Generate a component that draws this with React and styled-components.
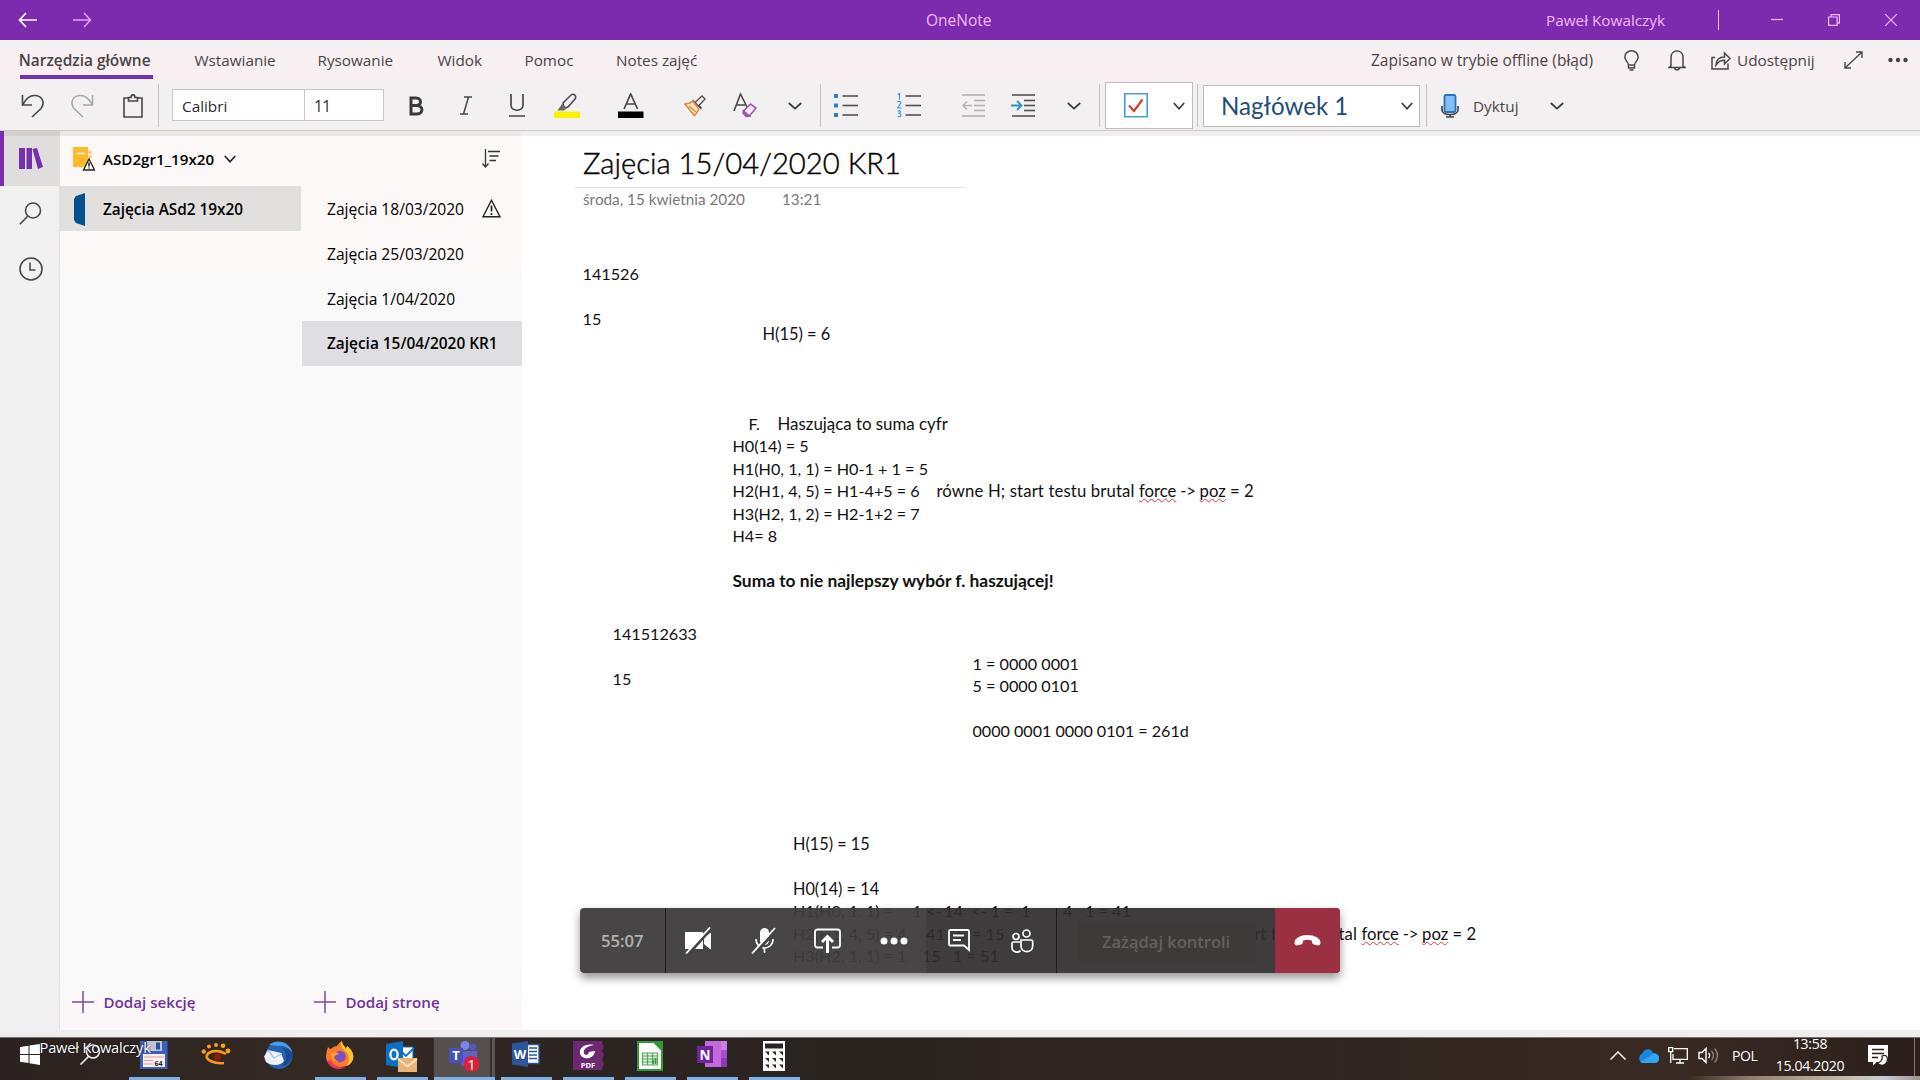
import React from 'react';
import styled, { createGlobalStyle, css } from 'styled-components';

const UI = '"Open Sans", "Noto Sans", sans-serif';
const NOTE = 'Lato, "Open Sans", sans-serif';

const Global = createGlobalStyle`
  * { box-sizing: border-box; }
  body { margin: 0; background: #fff; overflow: hidden; }
  svg { display: block; flex: none; }
`;

const Screen = styled.div`
  position: relative;
  width: 1920px;
  height: 1080px;
  overflow: hidden;
  display: flex;
  flex-direction: column;
  background: #fff;
  color: #000;
  font: 15.3px/20px ${UI};
  white-space: pre;
`;

/* ---------- Title bar ---------- */
const TitleBar = styled.header`
  height: 40px;
  flex: none;
  display: flex;
  align-items: center;
  background: #7c2bae;
  color: #f3b9f7;
  padding: 0 23px 0 18px;
`;
const NavArrows = styled.div`
  display: flex;
  gap: 36px;
  width: 908px;
`;
const AppName = styled.div`
  width: 620px;
  font-size: 15.5px;
  line-height: 42px;
`;
const Account = styled.div`
  width: 172px;
  line-height: 42px;
`;
const BarRule = styled.i`
  width: 1px;
  height: 20px;
  background: #f3b9f7;
`;
const WindowButtons = styled.div`
  display: flex;
  gap: 45px;
  margin-left: auto;
`;

/* ---------- Ribbon ---------- */
const Ribbon = styled.div`
  height: 91px;
  flex: none;
  background: linear-gradient(#f2f0f1 0, #f2f0f1 7px, #f8eff3 10px, #f8eff3 38px, #f3f0f1 44px);
  border-bottom: 1px solid #cfcacb;
  color: #4a4446;
`;
const TabRow = styled.nav`
  display: flex;
  align-items: flex-start;
  height: 40px;
  padding-left: 19.5px;
`;
const Tab = styled.div`
  height: 39px;
  line-height: 40px;
  font-size: ${p => (p.$active ? '15.45px' : '15.25px')};
  font-weight: ${p => (p.$active ? 600 : 400)};
  border-bottom: 4px solid ${p => (p.$active ? '#7530ad' : 'transparent')};
  width: ${p => p.$w}px;
  margin-right: ${p => p.$gap}px;
  text-indent: ${p => (p.$active ? -0.8 : 0)}px;
`;
const Status = styled.div`
  width: 253px;
  margin-left: 673px;
  font-size: 15.5px;
  line-height: 40px;
`;
const TabIcon = styled.div`
  width: ${p => p.$w}px;
  height: 40px;
  display: flex;
  align-items: center;
`;
const Share = styled.div`
  width: 107px;
  line-height: 40px;
  font-size: 15.35px;
`;
const Tools = styled.div`
  display: flex;
  align-items: center;
  height: 50px;
  padding: 1px 0 0 8px;
`;
const Tool = styled.div`
  width: ${p => p.$w}px;
  height: 40px;
  display: flex;
  align-items: center;
  justify-content: center;
`;
const Rule = styled.i`
  width: 1px;
  height: 43px;
  margin: 0 ${p => p.$r || 0}px 0 ${p => p.$l || 0}px;
  background: #c4bfc0;
`;
const FontBox = styled.div`
  display: flex;
  width: 212px;
  height: 32px;
  margin: 0 7px 1px 0;
  border: 1px solid #c9c4c6;
  background: #fff;
  color: #2c2a2b;
  line-height: 32px;
`;
const FontName = styled.div`
  width: 132px;
  padding-left: 9px;
  border-right: 1px solid #c9c4c6;
`;
const FontSize = styled.div`
  padding-left: 9px;
  letter-spacing: -0.6px;
  font-size: 15.5px;
`;
const CheckBox = styled.div`
  display: flex;
  align-items: center;
  gap: 25px;
  width: 88px;
  height: 47px;
  padding-left: 18px;
  border: 1px solid #c0bbbd;
  background: #fff;
`;
const StyleBox = styled.div`
  display: flex;
  align-items: center;
  justify-content: space-between;
  width: 217px;
  height: 42px;
  padding: 0 6px 0 17px;
  border: 1px solid #c0bbbd;
  background: #fff;
  color: #1f4e79;
  font: 24.1px/43px ${NOTE};
`;
const Dictate = styled.div`
  width: 50px;
  line-height: 40px;
`;

/* ---------- Body ---------- */
const Body = styled.div`
  height: 907px;
  display: flex;
  position: relative;
  flex: none;
`;
const TopShade = styled.div`
  position: absolute;
  left: 0;
  right: 0;
  top: 0;
  height: 5px;
  background: rgba(90, 70, 80, 0.09);
`;
const Rail = styled.aside`
  width: 60px;
  background: #f1f1f1;
  border-right: 1px solid #e3dfdf;
`;
const RailItem = styled.div`
  height: 55px;
  width: 60px;
  display: flex;
  align-items: center;
  padding: 0 0 0 ${p => (p.$active ? 15 : 19)}px;
  ${p => p.$active && css`
    border-left: 4px solid #7b2bb0;
    background: #e0dedd;
  `}
`;
const Panel = styled.section`
  width: 462px;
  display: flex;
  flex-direction: column;
  background: linear-gradient(#fcf8f8 0, #fcf8f8 130px, #f9f9f9 150px, #f9f9f9 840px, #fbf7f9 880px);
`;
const NotebookHead = styled.div`
  display: flex;
  align-items: center;
  height: 55px;
  padding: 0 22px 0 13px;
`;
const NotebookName = styled.div`
  width: 121px;
  margin-left: 8px;
  font-weight: 600;
  font-size: 15.15px;
`;
const SortSlot = styled.div`margin-left: auto;`;
const Lists = styled.div`
  display: flex;
  flex: 1;
`;
const SectionList = styled.div`width: 242px; display: flex; flex-direction: column;`;
const PageList = styled.div`width: 220px; display: flex; flex-direction: column;`;
const SectionRow = styled.div`
  display: flex;
  align-items: center;
  height: 45px;
  width: 241px;
  padding: 1px 0 0 14px;
  gap: 18px;
  background: #e2dfdf;
  font-weight: 600;
  font-size: 15.35px;
`;
const PageRow = styled.div`
  display: flex;
  align-items: center;
  height: 45px;
  padding: 0 21px 0 25px;
  justify-content: space-between;
  font-size: ${p => (p.$active ? 15.4 : 15.58)}px;
  ${p => p.$active && css`
    font-weight: 600;
    background: #dfdee0;
    padding-right: 0;
  `}
`;
const AddRow = styled.div`
  display: flex;
  align-items: center;
  gap: 9.5px;
  margin: auto 0 25px;
  height: 22px;
  padding: 0 0 0 12px;
  color: #71309f;
  font-weight: 600;
  font-size: 15.15px;
`;

/* ---------- Note canvas ---------- */
const Canvas = styled.main`
  flex: 1;
  position: relative;
  color: #111;
  font: 16.2px/22.5px ${NOTE};
`;
const NoteTitle = styled.div`
  margin: 6px 0 0 53px;
  padding-left: 8px;
  width: 390px;
  height: 51px;
  border-bottom: 1px solid #e6e3e5;
  font-size: 29.25px;
  font-weight: 300;
  line-height: 51px;
  color: #000;
  -webkit-text-stroke: 0.4px #000;
`;
const NoteDate = styled.div`
  display: flex;
  gap: 37px;
  margin-left: 61px;
  color: #7a7779;
  font-size: 15.3px;
  line-height: 22px;
`;
const Block = styled.div`
  position: absolute;
  left: ${p => p.$x - 522}px;
  top: ${p => p.$y - 131}px;
`;
const Line = styled.div`
  height: 22.5px;
  display: flex;
  padding-left: ${p => p.$indent || 0}px;
  font-weight: ${p => (p.$bold ? 700 : 400)};
  font-size: ${p => p.$size || 16.2}px;
`;
const Seg = styled.span`
  width: ${p => (p.$w ? `${p.$w}px` : 'auto')};
  font-size: ${p => p.$size || 16.2}px;
`;
const Lead = styled.span`letter-spacing: 0.14px;`;
const Arrow = styled.span`letter-spacing: -0.3px;`;
const Misspelt = styled.span`
  text-decoration: underline wavy #e0383e 1.2px;
  text-decoration-skip-ink: none;
  text-underline-offset: 1px;
`;

/* ---------- Call bar ---------- */
const CallBar = styled.div`
  position: absolute;
  left: 580px;
  top: 908px;
  width: 760px;
  height: 65px;
  display: flex;
  border-radius: 4px;
  overflow: hidden;
  color: #fff;
  background: linear-gradient(90deg, rgba(61, 59, 60, 0.95) 346px, rgba(46, 44, 45, 0.92) 346px);
`;
const CallShadow = styled.div`
  position: absolute;
  left: 580px;
  top: 908px;
  width: 760px;
  height: 65px;
  border-radius: 4px;
  box-shadow: 0 5px 10px rgba(0, 0, 0, 0.42);
  clip-path: polygon(-30px -30px, 790px -30px, 790px 95px, -30px 95px, -30px -30px, 0 0, 0 65px, 760px 65px, 760px 0, 0 0);
`;
const Timer = styled.div`
  width: 86px;
  padding-left: 21px;
  border-right: 1px solid #1f1e1e;
  color: #b4b1b0;
  font-weight: 600;
  font-size: 16.6px;
  line-height: 66px;
`;
const CallButton = styled.div`
  width: ${p => p.$w}px;
  display: flex;
  align-items: center;
  justify-content: center;
  padding-right: ${p => p.$nudge || 0}px;
`;
const ControlSlot = styled.div`
  flex: 1;
  display: flex;
  align-items: center;
  padding-left: 21px;
  border-left: 1px solid #1f1e1e;
`;
const ControlButton = styled.div`
  width: 178px;
  height: 40px;
  padding-left: 24px;
  background: #3c3b39;
  color: #626160;
  font-weight: 600;
  font-size: 16.5px;
  line-height: 41px;
`;
const HangUp = styled.div`
  width: 65px;
  display: flex;
  align-items: center;
  justify-content: center;
  background: #9c3043;
`;

/* ---------- Taskbar ---------- */
const Ledge = styled.div`
  height: 8px;
  margin-top: -8px;
  position: relative;
  background: #efedee;
  border-bottom: 1px solid #77706f;
  flex: none;
`;
const TaskbarFrame = styled.footer`
  height: 42px;
  flex: none;
  display: flex;
  position: relative;
  background: linear-gradient(90deg, #2b2321 0, #352923 340px, #2c2421 560px, #2a2421 900px, #33271f 1500px, #3a2a24 1650px, #2c1f1b 1920px);
`;
const Start = styled.div`
  width: 123.5px;
  display: flex;
  align-items: flex-start;
  padding: 6px 0 0 20px;
  gap: 40px;
`;
const TaskButton = styled.div`
  width: 62px;
  height: 42px;
  padding: 0 5.5px;
  display: flex;
  flex-direction: column;
  align-items: center;
  ${p => p.$focused && css`
    width: 61px;
    margin: 0 0.5px 0 0.5px;
    padding: 0;
    background: linear-gradient(90deg, #55504e 0 56px, #37302d 56px 57.5px, #5a5552 57.5px);
  `}
`;
const IconSlot = styled.div`
  height: 39px;
  display: flex;
  align-items: flex-start;
  padding: 3px 1px 0 0;
`;
const Running = styled.i`
  align-self: stretch;
  height: 3px;
  background: #7cb2e6;
`;
const Tray = styled.div`
  display: flex;
  align-items: center;
  margin-left: auto;
  width: 311px;
  height: 35px;
  padding: 0 5px 0 1px;
  color: #fff;
`;
const TrayIcon = styled.div`
  flex: none;
  width: ${p => p.$w}px;
`;
const Lang = styled.div`
  width: 34px;
  margin-left: -1px;
  font-size: 14px;
  letter-spacing: -0.45px;
`;
const Clock = styled.div`
  align-self: flex-start;
  width: 86px;
  height: 38px;
  margin: 0 15px 0 1px;
  text-align: center;
  font-size: 14.1px;
  letter-spacing: -0.35px;
`;
const ClockLine = styled.div`
  height: 22.5px;
  line-height: 22.5px;
  margin-top: ${p => p.$up || 0}px;
`;
const ShowDesktop = styled.i`
  align-self: flex-start;
  flex: none;
  width: 1px;
  height: 38px;
  margin-left: auto;
  background: #81756f;
`;
const Sliver = styled.i`
  position: absolute;
  right: 0;
  bottom: 0;
  width: 230px;
  height: 4px;
  background: linear-gradient(90deg, #3a2c22, #8d7f68 60px, #b3a58e 120px, #c9c2b4 170px, #c2cbdc 195px, #9a938d 230px);
`;
const Presenter = styled.div`
  position: absolute;
  left: 39.5px;
  top: 1037px;
  color: #fff;
  font-size: 14.6px;
  letter-spacing: -0.15px;
  text-shadow: 0 0 2px #000;
`;

/* ---------- Icons ---------- */
const Svg = ({ w, h, s = '#4a4648', sw = 1.4, children, ...r }) => (
  <svg width={w} height={h} viewBox={`0 0 ${w} ${h}`} fill="none" stroke={s} strokeWidth={sw} {...r}>{children}</svg>
);
const Chevron = ({ s = '#3c383a', w = 13 }) => (
  <Svg w={w} h={8} s={s} sw={1.7}><path d={`M.8 1 ${w / 2} 6.7 ${w - 0.8} 1`} /></Svg>
);
const Warning = ({ size = 19, fill = 'none' }) => (
  <svg width={size} height={size} viewBox="0 0 19 19" fill={fill} stroke="#222" strokeWidth="1.4">
    <path d="M9.5 1.2 18 17.8H1z" /><path d="M9.5 6.5v6M9.5 14v2" strokeWidth="1.7" />
  </svg>
);
const Lines = ({ x, ys, x2 = 24, s = '#555153' }) => <g stroke={s} strokeWidth="1.6">{ys.map(y => <path key={y} d={`M${x} ${y}H${x2}`} />)}</g>;
const Plus = () => <Svg w={22} h={22} s="#7a4a9c" sw={1.5}><path d="M11 0v22M0 11h22" /></Svg>;
const Glyph = ({ children, x, y, size, fill = '#fff', weight = 700, anchor = 'middle' }) => (
  <text x={x} y={y} fontFamily="Open Sans, sans-serif" fontSize={size} fontWeight={weight} fill={fill} textAnchor={anchor} stroke="none">{children}</text>
);

const Floppy = () => (
  <Svg w={28} h={28} s="none">
    <path d="M0 0h27.5v28H0z" fill="#3d5fc4" /><path d="M7 0h15v10H7z" fill="#bcc6d4" /><path d="M16 1.5h4v7h-4z" fill="#2c4c9c" />
    <path d="M3 13h22v13H3z" fill="#fbeff0" /><path d="M4 16h20M4 19.500h9M4 23h9" stroke="#e59aa0" strokeWidth="1" />
    <Glyph x={18.500} y={24.500} size={7} fill="#222">64</Glyph>
  </Svg>
);
const Eye = () => (
  <Svg w={30} h={26} s="#f39a1c" sw={2.6}>
    <path d="M25 13c-6-4-16-4-19 1-2 5 7 9 17 8" /><circle cx="16.500" cy="16" r="4" fill="#8c1f10" stroke="#5e1a0e" strokeWidth="1" />
    <g fill="#f6a21e" stroke="none"><circle cx="2.800" cy="10.500" r="2.200" /><circle cx="8" cy="5.500" r="2" /><circle cx="15" cy="4" r="2" /><circle cx="22" cy="4.800" r="2.300" /><circle cx="27" cy="10" r="2.400" /></g>
  </Svg>
);
const Thunderbird = () => (
  <Svg w={30} h={29} s="none">
    <circle cx="16" cy="14.500" r="13.500" fill="#2463b4" /><path d="M6 4C14-3 27 1 29.500 12c-3-5-8-8-14-7z" fill="#4a9de6" />
    <path d="M1 15.500 5 9l13 3 3 8c-3 5-13 5-18 1z" fill="#eef3fa" /><path d="m5 9 6 8 8-4.500" stroke="#a9bfd8" strokeWidth="1.300" fill="none" />
    <path d="M19 7c5 4 6 12 0 18 7-1 11-7 10-13-2-4-6-5-10-5z" fill="#1b4a94" />
  </Svg>
);
const Firefox = () => (
  <Svg w={30} h={29} s="none">
    <path d="M3 6c1 1 2 2 3 2 2-2 4-3 6-3 1-2 3-4 5-5 0 4 3 5 4 8l1-3c5 4 7 8 6 13-1 5-6 8-13 8S1 22 1 16C1 12 2 9 3 6z" fill="#ff7a2a" />
    <path d="M17 0c0 4 3 5 4 8l1-3c5 4 7 8 6 13-1 3-3 5-6 7 3-6 2-12-3-16-3-3-4-6-2-9z" fill="#ffc52e" />
    <path d="M2 20c3 8 12 10 19 6-7 1-13-1-15-7z" fill="#f0355c" /><circle cx="15" cy="15.500" r="5.800" fill="#7a4fc0" /><path d="M6 12c3-2 5 0 8 0-1 2-4 2-5 4 0 2 2 4 5 4-5 2-9-3-8-8z" fill="#ff9a30" />
  </Svg>
);
const Outlook = () => (
  <Svg w={32} h={32} s="none">
    <path d="M13 6h14v15H13z" fill="#fff" stroke="#1271c4" strokeWidth="1.200" /><path d="m15 10 5 5 8-8" stroke="#1271c4" strokeWidth="1.800" fill="none" />
    <path d="M0 3 17 0v27L0 24z" fill="#0d6fc4" /><ellipse cx="8" cy="13.500" rx="3.600" ry="4.800" stroke="#fff" strokeWidth="2.300" fill="none" />
    <path d="M12 17h19v14H12z" fill="#e8b578" /><path d="m12 18 9.500 7.500L31 18" stroke="#fbe3c4" strokeWidth="1.600" fill="none" />
  </Svg>
);
const Teams = () => (
  <Svg w={32} h={32} s="none">
    <circle cx="17" cy="4.500" r="4.500" fill="#7b83eb" /><circle cx="25" cy="6" r="3.300" fill="#5059c9" /><path d="M12 10h17v10c0 8-17 9-17 0z" fill="#5b63c8" />
    <path d="M1 7h14v15H1z" fill="#4a50b8" /><Glyph x={8} y={19} size={13}>T</Glyph>
    <circle cx="23.500" cy="23" r="8" fill="#d9213b" /><Glyph x={23.500} y={28.500} size={15} weight={400}>1</Glyph>
  </Svg>
);
const Word = () => (
  <Svg w={28} h={27} s="none">
    <path d="M14 3.500h13v19H14z" fill="#fff" stroke="#2b579a" /><path d="M17 7h8M17 10.500h8M17 14h8M17 17.500h8" stroke="#2b579a" strokeWidth="1.500" />
    <path d="M0 2.500 16 0v26L0 23.500z" fill="#2b579a" /><Glyph x={8} y={18} size={13}>W</Glyph>
  </Svg>
);
const Foxit = () => (
  <Svg w={31} h={31} s="none">
    <path d="M0 0h29v29H0z" fill="#6d2870" /><path d="m29 2 2 4-2 4 2 4-2 5 2 4-2 5z" fill="#6d2870" />
    <path d="M21 4C12 2 6 7 7 12.500c1.200 6.500 14 7 15-2.500l-6.500 1c1 3.500-4.500 4-4.700.2C10.600 7.500 15 5 21 4z" fill="#fff" /><Glyph x={15} y={27} size={7.500}>PDF</Glyph>
  </Svg>
);
const Calc = () => (
  <Svg w={26} h={30} s="none">
    <path d="M1 1h16l8 8v20H1z" fill="#fff" stroke="#2e9c34" strokeWidth="2" /><path d="M16 0h10v10z" fill="#2e9c34" />
    <path d="M5.500 12h15v12h-15zM5.500 15h15M5.500 18h15M5.500 21h15M10.500 12v12M15.500 12v12" stroke="#58a55c" strokeWidth="1.200" fill="#e4f4e2" />
    <path d="M16 23v-4M18.500 23v-6" stroke="#2e9c34" strokeWidth="1.600" />
  </Svg>
);
const OneNote = () => (
  <Svg w={30} h={27} s="none">
    <path d="M8 0h22v26H8z" fill="#c368dd" /><path d="M24 0h6v9h-6z" fill="#ce7ce6" /><path d="M24 9h6v8h-6z" fill="#a94fcb" /><path d="M24 17h6v9h-6z" fill="#8f3ab8" />
    <path d="M0 5h16v17H0z" fill="#6f2597" /><Glyph x={8} y={18.500} size={13.500}>N</Glyph>
  </Svg>
);
const Calculator = () => (
  <Svg w={22} h={30} s="none">
    <path d="M0 0h22v30H0z" fill="#fff" /><path d="M2 2.500h18v5H2z" fill="#2a2421" />
    {[10.5, 17, 23.5].map(y => [2, 9, 16].map(x => <path key={x + '-' + y} d={`M${x} ${y}h4v4z`} fill="#2a2421" />))}
  </Svg>
);

const apps = [
  [Floppy, true], [Eye, false], [Thunderbird, false], [Firefox, true], [Outlook, true], [Teams, true, true],
  [Word, true], [Foxit, true], [Calc, true], [OneNote, true], [Calculator, true],
];
const tabs = [['Narzędzia główne', 133, 42], ['Wstawianie', 81, 42], ['Rysowanie', 75, 45], ['Widok', 46, 41], ['Pomoc', 48, 43.5], ['Notes zajęć', 82, 0]];

const BruteForce = () => (
  <><Lead>równe H; start testu brutal </Lead><Misspelt>force</Misspelt><Arrow>{' -> '}</Arrow><Misspelt>poz</Misspelt> = 2</>
);

function Taskbar() {
  return (
    <>
      <Ledge />
      <TaskbarFrame>
        <Start>
          <Svg w={20} h={21} s="none"><path d="m0 3 8.500-1.300v8.300H0zM9.500 1.500 20 0v10H9.500zM0 11h8.500v8L0 17.800zM9.500 11H20v10L9.500 19.300z" fill="#fff" /></Svg>
          <Svg w={21} h={21} s="#fff" sw={1.500}><circle cx="13" cy="7.500" r="6.500" /><path d="M8.500 12.500.5 20.500" /></Svg>
        </Start>
        {apps.map(([Icon, running, focused], i) => (
          <TaskButton key={i} $focused={focused}>
            <IconSlot><Icon /></IconSlot>
            {running && <Running />}
          </TaskButton>
        ))}
        <Tray>
          <TrayIcon $w={28}><Svg w={16} h={9} s="#fff" sw={1.500}><path d="m.5 8.500 7.500-7.500 7.500 7.500" /></Svg></TrayIcon>
          <TrayIcon $w={30}>
            <Svg w={21} h={14} s="none"><path d="M5 14a5 5 0 0 1-.5-9.500C6-.5 13-1.500 15 4c4-.5 6 2 6 5 0 3-2 5-4.500 5z" fill="#1a86dd" /><path d="M2 13 15 5c4-1 6 1.500 6 4.500S19 14 16.500 14H5z" fill="#35a4ee" /></Svg>
          </TrayIcon>
          <TrayIcon $w={30}>
            <Svg w={20} h={17} s="#fff" sw={1.300}><path d="M6 1.700h13.300v10.600H5V7M12 12.500V16M8 16h8" /><path d="M.7.700h4v4h-4zM2.700 5v11" /></Svg>
          </TrayIcon>
          <TrayIcon $w={35}>
            <Svg w={21} h={17} s="#fff" sw={1.400}><path d="M1 5.500h3l4-4v14l-4-4H1zM10.500 6c1.500 1.500 1.500 3.500 0 5" /><path d="M13.500 4c2.700 2.700 2.700 6.300 0 9M16.500 1.500c4 4 4 10 0 14" stroke="#8c817b" /></Svg>
          </TrayIcon>
          <Lang>POL</Lang>
          <Clock><ClockLine $up={-5.5}>13:58</ClockLine><ClockLine>15.04.2020</ClockLine></Clock>
          <TrayIcon $w={21}>
            <Svg w={21} h={21} s="none"><path d="M0 0h20v17H9l-4 3.500V17H0z" fill="#fff" /><path d="M4 4.500h12M4 8.500h12M4 12.500h6" stroke="#2c1f1b" strokeWidth="1.300" /><path d="M14 11c1 4-2 7-5 7 5 5 12 1 10-6-1-2-3-2-5-1z" fill="#fff" stroke="#2c1f1b" strokeWidth="1.200" /></Svg>
          </TrayIcon>
          <ShowDesktop />
        </Tray>
        <Sliver />
      </TaskbarFrame>
    </>
  );
}

export default function App() {
  return (
    <Screen>
      <Global />
      <TitleBar>
        <NavArrows>
          <Svg w={19} h={16} s="#fff" sw={1.7}><path d="M8 1 1.500 8 8 15M1.500 8H19" /></Svg>
          <Svg w={19} h={16} s="#e6a6ee" sw={1.5}><path d="m11 1 6.500 7-6.500 7M17.500 8H0" /></Svg>
        </NavArrows>
        <AppName>OneNote</AppName>
        <Account>Paweł Kowalczyk</Account>
        <BarRule />
        <WindowButtons>
          <Svg w={12} h={12} s="#f3b9f7" sw={1.2}><path d="M0 5.500h12" /></Svg>
          <Svg w={12} h={12} s="#f3b9f7" sw={1.2}><path d="M.6 3h8.500v8.400H.6zM3 3V.6h8.400v8.500H9" /></Svg>
          <Svg w={12} h={12} s="#f3b9f7" sw={1.2}><path d="m0 0 12 12M12 0 0 12" /></Svg>
        </WindowButtons>
      </TitleBar>

      <Ribbon>
        <TabRow>
          {tabs.map(([name, w, gap], i) => <Tab key={name} $w={w} $gap={gap} $active={i === 0}>{name}</Tab>)}
          <Status>Zapisano w trybie offline (błąd)</Status>
          <TabIcon $w={44}>
            <Svg w={15} h={21} sw={1.5}><path d="M4.500 15c0-3-3.700-4-3.700-8a6.700 6.200 0 0 1 13.400 0c0 4-3.700 5-3.700 8zM4.500 15v3h6v-3M5.500 20h4" /></Svg>
          </TabIcon>
          <TabIcon $w={43}>
            <Svg w={18} h={21} sw={1.5}><path d="M3 16V7.500C3 3.500 5.500 1 9 1s6 2.500 6 6.500V16l2 1.500H1zM6.500 18c.5 2.500 4.500 2.500 5 0" /></Svg>
          </TabIcon>
          <TabIcon $w={26}>
            <Svg w={20} h={20} sw={1.5}><path d="M4 7.500H1V19h16v-5.500M5 15c.3-5 3-8 8.500-8V3l5.500 5.500-5.500 5.500v-3.700c-4 0-6.500 1.700-8.500 4.700z" /></Svg>
          </TabIcon>
          <Share>Udostępnij</Share>
          <TabIcon $w={44}>
            <Svg w={19} h={18} sw={1.4}><path d="M1 17 18 1M12 1h6v6M1 11v6h6" /></Svg>
          </TabIcon>
          <TabIcon $w={20}>
            <Svg w={20} h={6} s="none"><g fill="#444"><circle cx="2.500" cy="3" r="2.200" /><circle cx="10" cy="3" r="2.200" /><circle cx="17.500" cy="3" r="2.200" /></g></Svg>
          </TabIcon>
        </TabRow>

        <Tools>
          <Tool $w={49}><Svg w={23} h={24} sw={1.6}><path d="M1.500 1v10H11M2 10.500C5 4 10 1 15 1.500c7 1 9 8 5 13L11 23" /></Svg></Tool>
          <Tool $w={51}><Svg w={23} h={24} s="#a9a5a7" sw={1.5}><path d="M21.500 1v10H12M21 10.500C18 4 13 1 8 1.500 1 2.500-1 9.500 3 14.500L12 23" /></Svg></Tool>
          <Tool $w={50}><Svg w={20} h={24} sw={1.6}><path d="M6 4H1v19h18V4h-5M5.500 3.500H8C8 0 12 0 12 3.500h2.500V7h-9z" /></Svg></Tool>
          <Rule $r={13} />
          <FontBox><FontName>Calibri</FontName><FontSize>11</FontSize></FontBox>
          <Tool $w={50}><Svg w={16} h={20} s="#3c383a" sw={3}><path d="M3 2h5c6 0 6 7.500 0 7.500H3zM3 9.500h6c6.500 0 6.500 8.500 0 8.500H3z" /></Svg></Tool>
          <Tool $w={50}><Svg w={12} h={19} sw={1.5}><path d="M4 1h8M0 18h8M8.500 1l-5 17" /></Svg></Tool>
          <Tool $w={51}><Svg w={16} h={23} sw={1.7}><path d="M2 0v11c0 7 12 7 12 0V0M0 22h16" /></Svg></Tool>
          <Tool $w={49}>
            <Svg w={26} h={25} sw={1.5}><path d="M0 18.500h26V25H0z" fill="#fdf100" stroke="none" /><path d="m9 10 8-8c3-2 6 1 4 4l-7 8-4 1z" /><path d="m8 11 5 4-3 2.500H3.500z" fill="#6b6668" stroke="none" /></Svg>
          </Tool>
          <Tool $w={79}><Svg w={26} h={25} sw={1.7}><path d="M0 18.500h25.500V25H0z" fill="#000" stroke="none" /><path d="M6 16 12.700 1l6.800 15M8.500 11h8.500" /></Svg></Tool>
          <Tool $w={50}>
            <Svg w={22} h={22} s="#5a5052" sw={1.4}><path d="m11.500 7 6.500-6 3 3-6 6.500 2.500 2.500M8.500 5l9 9" /><path d="M8.500 6C6.500 8 3.500 9 .8 9l9.700 11.500c2-2 3-3.500 4.500-6.500z" stroke="#d98b3e" strokeWidth="1.600" fill="#fbe3c6" /><path d="m5 11 7 6" stroke="#d98b3e" /></Svg>
          </Tool>
          <Tool $w={50}>
            <Svg w={24} h={25} sw={1.6}><path d="M1 18 7.500 1 14 14M3 12h9" /><path d="m10.500 18 7-7 5.500 4-6.500 8-3 .500-3-3z" stroke="#9b56b0" fill="#f7edfa" /><path d="m10.500 18 6 5-3 .500-3-3z" fill="#9b56b0" stroke="#9b56b0" /></Svg>
          </Tool>
          <Tool $w={50}><Chevron w={14} /></Tool>
          <Rule />
          <Tool $w={49}>
            <Svg w={24} h={23}><path d="M0 0h4v4H0zM0 9.500h4v4H0zM0 19h4v4H0z" fill="#2f7fc0" stroke="none" /><Lines x={8.500} ys={[2, 11.500, 21]} /></Svg>
          </Tool>
          <Tool $w={78}>
            <Svg w={24} h={25}><g stroke="#3a93cf" strokeWidth="1.200"><path d="M1 1.500 2.500.500v6M.5 9c2-1.500 4-.5 3 1.500L.8 15h3.700M.5 18c3-1 4 1 1.500 2.500 3.500 1 2 4-1.500 3" /></g><Lines x={8.500} ys={[3, 12.500, 22]} /></Svg>
          </Tool>
          <Tool $w={50}>
            <Svg w={24} h={23}><Lines x={1} ys={[1, 22]} s="#b5b1b2" /><Lines x={13} ys={[6.500, 11.500, 16.500]} s="#b5b1b2" /><path d="M11 11.500H2M6 7.500l-4 4 4 4" stroke="#b5b1b2" /></Svg>
          </Tool>
          <Tool $w={50}>
            <Svg w={24} h={23}><Lines x={1} ys={[1, 22]} /><Lines x={13} ys={[6.500, 11.500, 16.500]} /><path d="M0 11.500h10M6 7l4.500 4.500L6 16" stroke="#2b8fd0" strokeWidth="1.800" /></Svg>
          </Tool>
          <Tool $w={51}><Chevron w={14} /></Tool>
          <Rule $r={5} />
          <CheckBox>
            <Svg w={24} h={25} s="#4aa0cc" sw={1.6}><path d="M.8.8h22.400v23H.8z" /><path d="m5 12.500 5 5.500L18.500 6.500" stroke="#d2402c" strokeWidth="2.200" /></Svg>
            <Chevron w={12} />
          </CheckBox>
          <Rule $l={4} $r={5} />
          <StyleBox>Nagłówek 1<Chevron w={12} /></StyleBox>
          <Rule $l={6} />
          <Tool $w={46}>
            <Svg w={18} h={24} sw={1.7}><path d="M1 12v4c0 6 16 6 16 0v-4M9 20v3M5 23h8" /><rect x="3.500" y="1" width="11" height="17" rx="1.500" fill="#7fc0f7" stroke="#2a72b8" strokeWidth="1.800" /></Svg>
          </Tool>
          <Dictate>Dyktuj</Dictate>
          <Tool $w={67}><Chevron w={14} /></Tool>
        </Tools>
      </Ribbon>

      <Body>
        <Rail>
          <RailItem $active>
            <Svg w={24} h={21} s="none"><path d="M0 0h6v21H0zM7.500 0h5.500v21H7.500zM13.500 1 18 0l6 19-5 2z" fill="#7531ad" /></Svg>
          </RailItem>
          <RailItem><Svg w={23} h={23} sw={1.6}><circle cx="14" cy="8.500" r="7.500" /><path d="M9 14 .8 22.300" /></Svg></RailItem>
          <RailItem><Svg w={24} h={24} sw={1.6}><circle cx="12" cy="12" r="11" /><path d="M11 5.500V13h5.500" /></Svg></RailItem>
        </Rail>

        <Panel>
          <NotebookHead>
            <Svg w={22} h={24} s="none">
              <path d="M0 0h15v20H0z" fill="#fdbb2b" /><path d="M15.500 4h3v3h-3zM15.500 8.500h3v3h-3z" fill="#fcc95a" /><path d="M4 6.500h8" stroke="#fff" strokeWidth="1.500" />
              <path d="m16 12 5.500 11H10.500z" fill="#fff" stroke="#222" strokeWidth="1.300" /><path d="M16 15.500v4M16 20.500v1" stroke="#222" strokeWidth="1.500" />
            </Svg>
            <NotebookName>ASD2gr1_19x20</NotebookName>
            <Chevron w={12} s="#222" />
            <SortSlot><Svg w={18} h={19} s="#333" sw={1.3}><path d="M3.500 0v18M.5 14.500l3 3.500 3-3.500M6 2.500h12M7.500 7h9M7.500 11.500H14" /></Svg></SortSlot>
          </NotebookHead>
          <Lists>
            <SectionList>
              <SectionRow>
                <Svg w={11} h={33} s="none"><path d="M11 0v33L2 30 0 27V6l2-3z" fill="#03508f" /></Svg>
                Zajęcia ASd2 19x20
              </SectionRow>
              <AddRow><Plus />Dodaj sekcję</AddRow>
            </SectionList>
            <PageList>
              <PageRow>Zajęcia 18/03/2020<Warning /></PageRow>
              <PageRow>Zajęcia 25/03/2020</PageRow>
              <PageRow>Zajęcia 1/04/2020</PageRow>
              <PageRow $active>Zajęcia 15/04/2020 KR1</PageRow>
              <AddRow><Plus />Dodaj stronę</AddRow>
            </PageList>
          </Lists>
        </Panel>

        <Canvas>
          <NoteTitle>Zajęcia 15/04/2020 KR1</NoteTitle>
          <NoteDate><span>środa, 15 kwietnia 2020</span><span>13:21</span></NoteDate>

          <Block $x={582.5} $y={262.5}>
            <Line>141526</Line><Line /><Line>15</Line>
          </Block>
          <Block $x={762.5} $y={323}><Line $size={16.45}>H(15) = 6</Line></Block>
          <Block $x={732.5} $y={412.5}>
            <Line $indent={16}><Seg $w={29}>F.</Seg><Seg $size={16.85}>Haszująca to suma cyfr</Seg></Line>
            <Line>H0(14) = 5</Line>
            <Line>H1(H0, 1, 1) = H0-1 + 1 = 5</Line>
            <Line><Seg $w={204}>H2(H1, 4, 5) = H1-4+5 = 6</Seg><Seg $size={16.7}><BruteForce /></Seg></Line>
            <Line>H3(H2, 1, 2) = H2-1+2 = 7</Line>
            <Line>H4= 8</Line>
            <Line />
            <Line $bold $size={17.37}>Suma to nie najlepszy wybór f. haszującej!</Line>
          </Block>
          <Block $x={612.5} $y={622.5}>
            <Line>141512633</Line><Line /><Line>15</Line>
          </Block>
          <Block $x={972.5} $y={652.5}>
            <Line>1 = 0000 0001</Line><Line>5 = 0000 0101</Line><Line /><Line $size={16.1}>0000 0001 0000 0101 = 261d</Line>
          </Block>
          <Block $x={793} $y={832.5}>
            <Line $size={16.3}>H(15) = 15</Line>
            <Line />
            <Line $size={16.3}>H0(14) = 14</Line>
            <Line><Seg $w={119.5}>H1(H0, 1, 1) =</Seg><Seg $w={31.5}>{'1 <-'}</Seg><Seg $w={27}>14</Seg><Seg $w={50}>{'<- 1 ='}</Seg><Seg $w={42}>1</Seg><Seg $w={22}>4</Seg><Seg>1 = 41</Seg></Line>
            <Line><Seg $w={133}>H2(H1, 4, 5) = 4</Seg><Seg $w={30}>41</Seg><Seg $w={16}>5</Seg><Seg $w={187}>= 15</Seg><Seg $size={16.7}><BruteForce /></Seg></Line>
            <Line><Seg $w={129}>H3(H2, 1, 1) = 1</Seg><Seg $w={31}>15</Seg><Seg>1 = 51</Seg></Line>
          </Block>
        </Canvas>
        <TopShade />
      </Body>

      <Taskbar />

      <CallShadow />
      <CallBar>
        <Timer>55:07</Timer>
        <CallButton $w={66} $nudge={2}>
          <Svg w={28} h={27} s="none"><path d="M1 5h18v17H1zM20 11l6-5h1v16h-1l-6-5z" fill="#fff" /><path d="M4.500 27 27 1.500" stroke="#444243" strokeWidth="3" /><path d="M2 26.500 26 .500" stroke="#fff" strokeWidth="1.800" /></Svg>
        </CallButton>
        <CallButton $w={62}>
          <Svg w={25} h={27} s="#fff" sw={1.6}><rect x="9" y="1" width="9" height="17" rx="4.500" fill="#fff" stroke="none" /><path d="M5 12c0 12 17 12 17 0M13.500 21v5" /><path d="M3.500 27 25.500 3" stroke="#444243" strokeWidth="3" /><path d="M1 26.500 24 1" strokeWidth="1.800" /></Svg>
        </CallButton>
        <CallButton $w={67}>
          <Svg w={27} h={25} s="#fff" sw={1.8}><path d="M9 19.500H3.500C2 19.500 1 18.500 1 17V4c0-1.500 1-2.500 2.500-2.500h20C25 1.500 26 2.500 26 4v13c0 1.500-1 2.500-2.500 2.500H18" /><path d="M13.500 25V9M8 14l5.500-5.500L19 14" strokeWidth="3" /></Svg>
        </CallButton>
        <CallButton $w={65}>
          <Svg w={28} h={8} s="none"><g fill="#fff"><circle cx="4" cy="4" r="3.500" /><circle cx="14" cy="4" r="3.500" /><circle cx="24" cy="4" r="3.500" /></g></Svg>
        </CallButton>
        <CallButton $w={67} $nudge={1}>
          <Svg w={22} h={23} s="#fff" sw={1.8}><path d="M2.500 1h17c1 0 1.500.5 1.500 1.500V21l-5-4.500H2.500C1.500 16.500 1 16 1 15V2.500C1 1.500 1.500 1 2.500 1zM5 6.500h11M5 11h8" /></Svg>
        </CallButton>
        <CallButton $w={63} $nudge={4}>
          <Svg w={23} h={24} s="#fff" sw={1.7}><circle cx="5" cy="7.500" r="3" /><circle cx="15.500" cy="4.500" r="3.500" /><path d="M9 13H2.500C1.500 13 1 13.500 1 14.500v4c0 5 7 5.500 8.500 3M10 11h10c1.200 0 1.700.5 1.700 1.500V17c0 7.500-11.700 7.500-11.700 0z" /></Svg>
        </CallButton>
        <ControlSlot><ControlButton>Zażądaj kontroli</ControlButton></ControlSlot>
        <HangUp>
          <Svg w={27} h={12} s="none"><path d="M13.500 0C20 0 27 3.500 26.500 8c-.2 2-1.500 2.800-3.500 2.300l-3-.8c-1.700-.5-2-1.500-2-3.700-3-1.300-6-1.300-9 0 0 2.200-.3 3.200-2 3.700l-3 .8C2 10.800.7 10 .5 8 0 3.500 7 0 13.500 0z" fill="#fff" /></Svg>
        </HangUp>
      </CallBar>
      <Presenter>Paweł Kowalczyk</Presenter>
    </Screen>
  );
}
